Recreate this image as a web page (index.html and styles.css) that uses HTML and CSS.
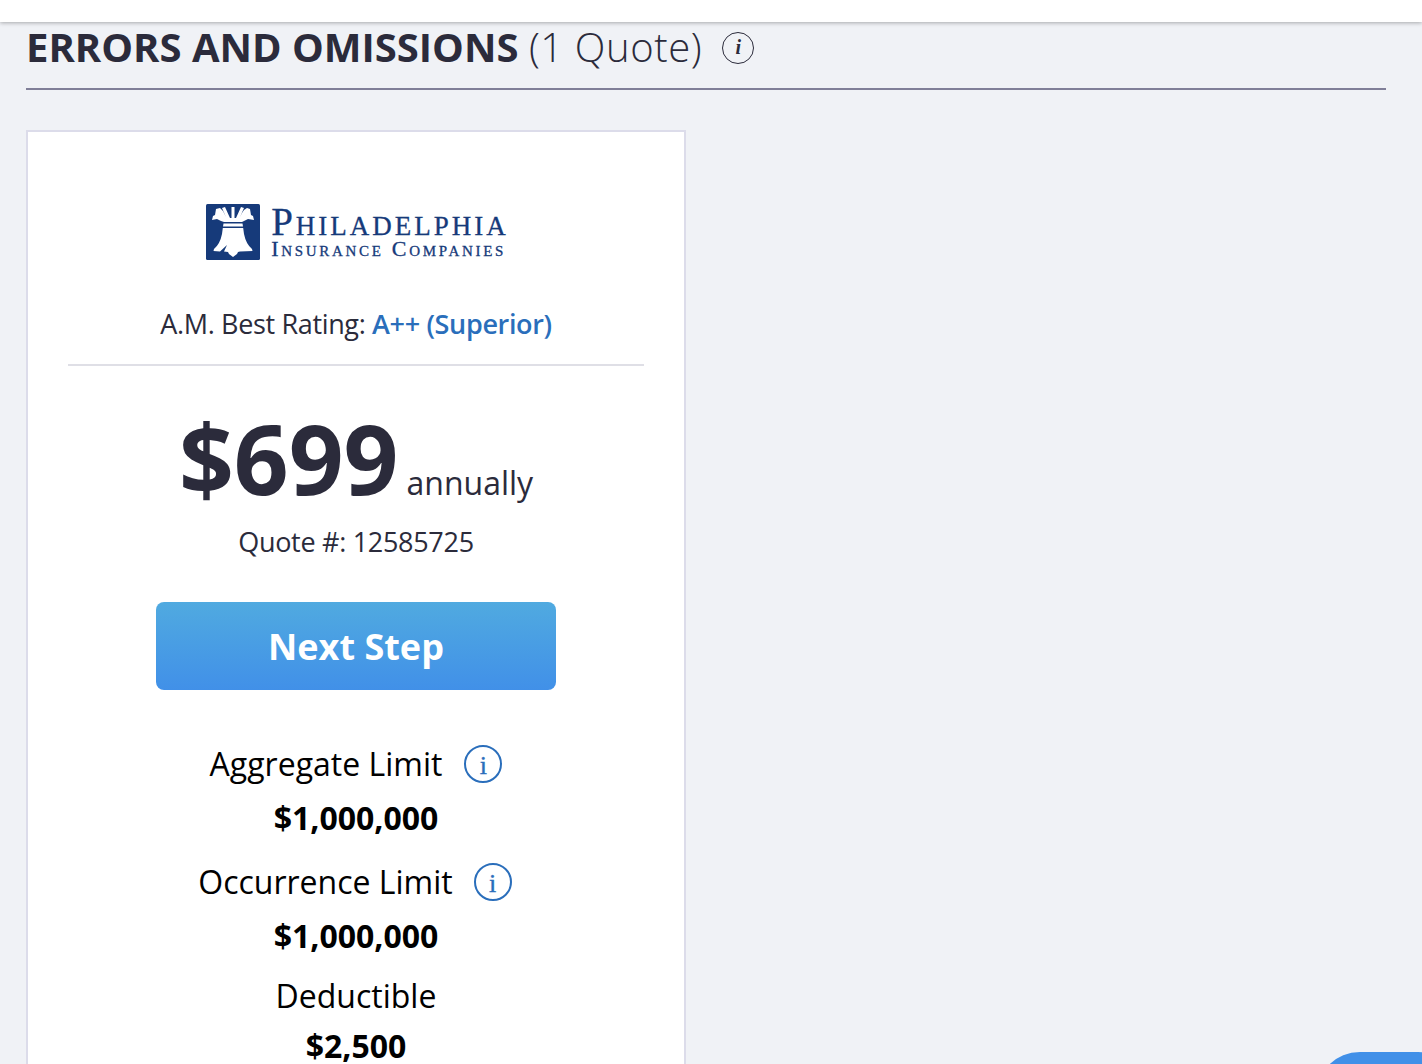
FILE: index.html
```html
<!DOCTYPE html>
<html lang="en">
<head>
<meta charset="utf-8">
<title>Errors and Omissions</title>
<link rel="stylesheet" href="styles.css">
</head>
<body>
<header class="topbar"></header>
<main class="content">
  <div class="section-head">
    <h1 class="section-title"><strong>ERRORS AND OMISSIONS</strong> <span class="count">(1 Quote)</span></h1>
    <span class="head-info">i</span>
  </div>
  <article class="card">
    <div class="logo">
      <svg class="bell" viewBox="0 0 54 56" aria-hidden="true">
        <rect width="54" height="56" rx="1.5" fill="#163a7a"/>
        <path fill="#fff" d="M6 16 L7 12 L9 11 L10 5 L14 4 L17 7 L19 11 L20 13 L16 4 L19 3 L24 14 L25.500 14 L25.500 3 L28.500 3 L28.500 14 L30 14 L35 3 L38 4 L34 13 L36 9 L38 6 L41 4 L44 5 L45 11 L47 12 L48 16 L42 15 L38 17 L36 18 L18 18 L15 17 L11 15 Z"/>
        <path fill="#fff" d="M17.500 19.500 L36.500 19.500 L37 22.500 L17 22.500 Z M16.800 24 L37.200 24 L38 30 Q40 40 46 45 L46.500 47 L34 47.500 L32 48 L31 50 L27 53 L23 50 L22 48 L18 47.500 L21 41 L14 47.500 L7.500 47 L8 45 Q14 40 16 30 Z"/>
      </svg>
      <div class="logo-text">
        <span class="logo-name">Philadelphia</span>
        <span class="logo-sub">Insurance Companies</span>
      </div>
    </div>
    <p class="rating">A.M. Best Rating: <b class="rating-value">A++ (Superior)</b></p>
    <div class="price-row"><span class="price">$699</span> <span class="period">annually</span></div>
    <p class="quote-no">Quote #: 12585725</p>
    <button class="next" type="button">Next Step</button>
    <dl class="terms">
      <dt class="term">Aggregate Limit<span class="info">i</span></dt>
      <dd class="value">$1,000,000</dd>
      <dt class="term term-second">Occurrence Limit<span class="info">i</span></dt>
      <dd class="value">$1,000,000</dd>
      <dt class="term term-third">Deductible</dt>
      <dd class="value value-last">$2,500</dd>
    </dl>
  </article>
</main>
<div class="chat-bubble"></div>
</body>
</html>
```
FILE: styles.css
```css
* { box-sizing: border-box; }
html, body { margin: 0; height: 1064px; overflow: hidden; }
body { background: #f0f2f6; font-family: "Open Sans", sans-serif; color: #2b2b3b; position: relative; }
.topbar { height: 22px; background: #fff; box-shadow: 0 1px 4px rgba(0,0,0,.3); position: relative; }
.content { padding: 0 36px 0 26px; }
.section-head { display: flex; align-items: center; height: 68px; border-bottom: 2px solid #807f98; padding-bottom: 16px; }
.section-title { margin: 0; font-size: 40px; font-weight: 400; line-height: 50px; white-space: nowrap; }
.section-title strong { font-weight: 700; }
.count { font-weight: 300; letter-spacing: .6px; }
.head-info { width: 32px; height: 32px; margin: 1px 0 0 20px; border: 1.500px solid #2b2b3b; border-radius: 50%; display: flex; align-items: center; justify-content: center; font: italic 700 20px "Liberation Serif", serif; }
.card { width: 660px; margin-top: 40px; height: 1000px; background: #fff; border: 2px solid #dcdcea; padding: 0 40px; display: flex; flex-direction: column; align-items: center; }
.logo { display: flex; align-items: center; gap: 11px; margin: 72px 0 0 3px; height: 56px; }
.bell { width: 54px; height: 56px; display: block; flex: none; }
.logo-text { display: flex; flex-direction: column; color: #163a7a; font-family: "Liberation Serif", serif; font-variant: small-caps; white-space: nowrap; -webkit-text-stroke: .3px #163a7a; }
.logo-name { font-size: 39px; line-height: 34px; letter-spacing: 3px; }
.logo-sub { font-size: 22px; line-height: 20px; letter-spacing: 2.700px; }
.rating { margin: 0; padding: 44px 0 20px; width: 100%; text-align: center; font-size: 27px; line-height: 40px; border-bottom: 2px solid #dfdfe6; letter-spacing: -.35px; font-weight: 400; }
.rating-value { color: #2a6ebb; font-weight: 600; }
.price-row { margin-top: 28px; line-height: 128px; height: 128px; white-space: nowrap; display: flex; align-items: baseline; gap: 8px; }
.price { font-size: 96px; font-weight: 700; }
.period { font-size: 32px; font-weight: 400; }
.quote-no { margin: 0; font-size: 27px; line-height: 40px; letter-spacing: -.3px; }
.next { margin-top: 40px; width: 400px; height: 88px; border: 0; border-radius: 8px; background: linear-gradient(#50aae0, #4190e8); color: #fff; font: 700 36px "Open Sans", sans-serif; flex: none; }
.terms { margin: 47px 0 0; text-align: center; color: #000; }
.term { font-size: 32px; line-height: 54px; display: flex; align-items: center; justify-content: center; gap: 22px; }
.term-second { margin-top: 10px; gap: 21px; padding-right: 2px; }
.term-third { margin-top: 6px; }
.value { margin: 0; font-size: 32px; font-weight: 700; line-height: 54px; }
.value-last { margin-top: 5px; line-height: 36px; }
.info { width: 38px; height: 38px; border: 2px solid #2a6ebb; border-radius: 50%; color: #2a6ebb; display: flex; align-items: center; justify-content: center; padding-top: 3px; font: 400 26px "Liberation Serif", serif; -webkit-text-stroke: .4px #2a6ebb; }
.chat-bubble { position: absolute; right: -40px; top: 1052px; width: 146px; height: 160px; border-radius: 44px; background: #4190e8; }
```
